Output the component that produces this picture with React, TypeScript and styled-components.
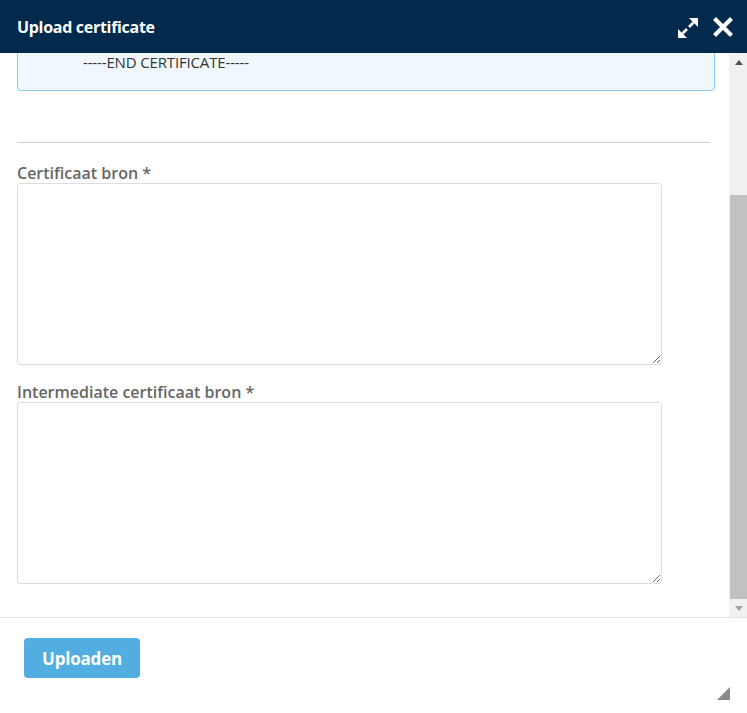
import React, { useLayoutEffect, useRef, useState } from 'react';
import styled, { createGlobalStyle } from 'styled-components';

const GlobalStyle = createGlobalStyle`
  html, body {
    margin: 0;
    padding: 0;
    background: #ffffff;
  }
  body {
    font-family: 'Open Sans', 'Liberation Sans', Arial, sans-serif;
  }
  * {
    box-sizing: border-box;
  }
`;

const certLines = [
  '-----BEGIN CERTIFICATE-----',
  'MIIFazCCA1OgAwIBAgIRAIIQz7DSQONZRGPgu2OCiwAwDQYJKoZIhvcNAQELBQAw',
  'TzELMAkGA1UEBhMCVVMxKTAnBgNVBAoTIEludGVybmV0IFNlY3VyaXR5IFJlc2Vh',
  'cmNoIEdyb3VwMRUwEwYDVQQDEwxJU1JHIFJvb3QgWDEwHhcNMTUwNjA0MTEwNDM4',
  'WhcNMzUwNjA0MTEwNDM4WjBPMQswCQYDVQQGEwJVUzEpMCcGA1UEChMgSW50ZXJu',
  'ZXQgU2VjdXJpdHkgUmVzZWFyY2ggR3JvdXAxFTATBgNVBAMTDElTUkcgUm9vdCBY',
  'MTCCAiIwDQYJKoZIhvcNAQEBBQADggIPADCCAgoCggIBAK3oJHP0FDfzm54rVygc',
  '-----END CERTIFICATE-----',
];

const App: React.FC = () => {
  const scrollRef = useRef<HTMLDivElement>(null);
  const [thumb, setThumb] = useState<number>(398);

  useLayoutEffect(() => {
    const el = scrollRef.current;
    if (!el) return;
    el.scrollTop = el.scrollHeight;
    const track = el.clientHeight - 36;
    setThumb(Math.round((el.clientHeight / el.scrollHeight) * track));
  }, []);

  return (
    <>
      <GlobalStyle />
      <StyledDialog>
        <StyledHeader>
          <StyledTitle>Upload certificate</StyledTitle>
          <StyledHeaderActions>
            <StyledIconButton aria-label="maximize" offset={2}>
              <svg width="20" height="20" viewBox="0 0 20 20">
                <path d="M11 0h9v9z" fill="#fff" />
                <path d="M15.5 4.5l-4.5 4.5" stroke="#fff" strokeWidth="2.6" />
                <path d="M0 11v9h9z" fill="#fff" />
                <path d="M4.5 15.5l4.5-4.5" stroke="#fff" strokeWidth="2.6" />
              </svg>
            </StyledIconButton>
            <StyledIconButton aria-label="close" offset={0}>
              <svg width="20" height="20" viewBox="0 0 20 20">
                <path
                  d="M3 3l14 14M17 3L3 17"
                  stroke="#fff"
                  strokeWidth="4.2"
                  strokeLinecap="square"
                />
              </svg>
            </StyledIconButton>
          </StyledHeaderActions>
        </StyledHeader>

        <StyledBody>
          <StyledScroller ref={scrollRef}>
            <StyledLabel>Huidig certificaat</StyledLabel>
            <StyledCertBox>
              {certLines.map((line) => (
                <div key={line}>{line}</div>
              ))}
            </StyledCertBox>
            <StyledDivider />
            <StyledLabel>Certificaat bron *</StyledLabel>
            <StyledTextArea />
            <StyledLabel>Intermediate certificaat bron *</StyledLabel>
            <StyledTextArea />
          </StyledScroller>
          <StyledScrollbar>
            <StyledArrow>
              <StyledArrowUp />
            </StyledArrow>
            <StyledTrack>
              <StyledThumb style={{ height: thumb }} />
            </StyledTrack>
            <StyledArrow>
              <StyledArrowDown />
            </StyledArrow>
          </StyledScrollbar>
        </StyledBody>

        <StyledFooter>
          <StyledButton type="button">Uploaden</StyledButton>
        </StyledFooter>
        <StyledGrip />
      </StyledDialog>
    </>
  );
};
export default App;

const StyledDialog = styled.div`
  position: relative;
  width: 747px;
  height: 713px;
  display: flex;
  flex-direction: column;
  background: #ffffff;
  overflow: hidden;
`;

const StyledHeader = styled.div`
  height: 53px;
  flex: none;
  display: flex;
  align-items: center;
  justify-content: space-between;
  padding: 0 14px 0 17px;
  background: #012a4d;
`;

const StyledTitle = styled.div`
  color: #ffffff;
  font-size: 16px;
  font-weight: 700;
  letter-spacing: -0.3px;
  margin-top: 1px;
`;

const StyledHeaderActions = styled.div`
  display: flex;
  align-items: center;
  gap: 15px;
`;

const StyledIconButton = styled.button<{ offset: number }>`
  display: flex;
  width: 20px;
  height: 20px;
  padding: 0;
  border: 0;
  background: none;
  cursor: pointer;
  margin-top: ${(props) => props.offset}px;
`;

const StyledBody = styled.div`
  height: 564px;
  flex: none;
  display: flex;
  flex-direction: row;
`;

const StyledScroller = styled.div`
  flex: 1;
  min-width: 0;
  overflow: hidden;
  padding: 0 14px 16px 17px;
`;

const StyledLabel = styled.label`
  display: block;
  height: 20px;
  line-height: 20px;
  font-size: 16px;
  font-weight: 600;
  color: #666666;
  letter-spacing: 0px;
`;

const StyledCertBox = styled.div`
  margin-top: 4px;
  padding: 8px 20px 18px 65px;
  background: #f0f8fe;
  border: 1px solid #8ecbeb;
  border-radius: 4px;
  color: #333333;
  font-size: 15px;
  line-height: 20px;
  letter-spacing: -0.15px;
  white-space: nowrap;
  overflow: hidden;
`;

const StyledDivider = styled.hr`
  margin: 51px 5px 20px 0;
  border: 0;
  border-top: 1px solid #cccccc;
  height: 0;
`;

const StyledTextArea = styled.textarea`
  display: block;
  width: 645px;
  height: 182px;
  margin: 0 0 17px;
  border: 1px solid #dddddd;
  border-radius: 3px;
  background: #ffffff;
  resize: both;
  font-family: inherit;
  font-size: 14px;
`;

const StyledScrollbar = styled.div`
  width: 18px;
  flex: none;
  display: flex;
  flex-direction: column;
  background: #f1f1f1;
  padding-left: 1px;
`;

const StyledArrow = styled.div`
  height: 18px;
  flex: none;
  display: flex;
  align-items: center;
  justify-content: center;
`;

const StyledArrowUp = styled.div`
  width: 0;
  height: 0;
  border-left: 4.5px solid transparent;
  border-right: 4.5px solid transparent;
  border-bottom: 5px solid #505050;
`;

const StyledArrowDown = styled.div`
  width: 0;
  height: 0;
  border-left: 4.5px solid transparent;
  border-right: 4.5px solid transparent;
  border-top: 5px solid #a3a3a3;
`;

const StyledTrack = styled.div`
  flex: 1;
  display: flex;
  flex-direction: column;
  justify-content: flex-end;
`;

const StyledThumb = styled.div`
  width: 100%;
  background: #c1c1c1;
`;

const StyledFooter = styled.div`
  flex: 1;
  border-top: 1px solid #e5e5e5;
  padding: 20px 24px;
`;

const StyledButton = styled.button`
  height: 40px;
  padding: 0 18px;
  border: 0;
  border-radius: 4px;
  background: #52ade0;
  color: #ffffff;
  font-family: inherit;
  font-size: 17px;
  font-weight: 700;
  letter-spacing: -0.2px;
  cursor: pointer;
`;

const StyledGrip = styled.div`
  position: absolute;
  right: 17px;
  bottom: 13px;
  width: 0;
  height: 0;
  border-left: 13px solid transparent;
  border-bottom: 13px solid #8a8a8a;
`;
